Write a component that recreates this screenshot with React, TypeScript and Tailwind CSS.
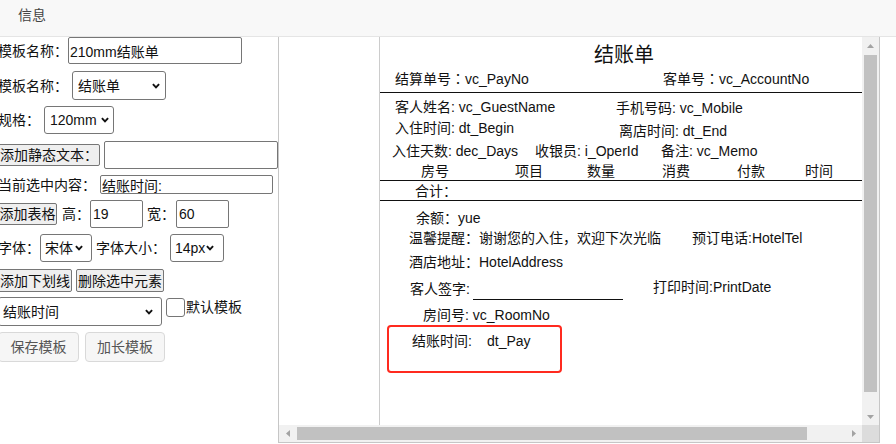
import React from "react";

const ctl = "border border-[#767676] bg-white text-[14px] text-[#111] outline-none";
const btn = "border border-[#767676] bg-[#efefef] rounded-[2px] text-[14px] leading-[18px] text-[#111] px-0 flex items-center justify-center whitespace-nowrap";
const T = "absolute whitespace-nowrap text-[14px] leading-[20px] text-[#111]";

function Chevron({ className }: { className: string }) {
  return (
    <svg
      width="8"
      height="6"
      viewBox="0 0 8 6"
      className={"pointer-events-none absolute top-1/2 -translate-y-1/2 " + className}
    >
      <path d="M0.9 1.1 L4 4.4 L7.1 1.1" fill="none" stroke="#111" strokeWidth="1.9" />
    </svg>
  );
}

function Colon() {
  return <span className="font-['Noto_Sans_CJK_TC',sans-serif]">：</span>;
}

function Arrow({ dir }: { dir: "up" | "down" | "left" | "right" }) {
  const d =
    dir === "up"
      ? "M0 4 L3.5 0 L7 4 Z"
      : dir === "down"
      ? "M0 0 L7 0 L3.5 4 Z"
      : dir === "left"
      ? "M4 0 L4 7 L0 3.5 Z"
      : "M0 0 L4 3.5 L0 7 Z";
  const vert = dir === "up" || dir === "down";
  return (
    <svg width={vert ? 7 : 4} height={vert ? 4 : 7} viewBox={vert ? "0 0 7 4" : "0 0 4 7"}>
      <path d={d} fill="#a3a3a3" />
    </svg>
  );
}

export default function App() {
  return (
    <div className="w-[896px] h-[444px] overflow-hidden bg-white font-['Liberation_Sans','Noto_Sans_CJK_SC',sans-serif] text-[14px] text-[#111]">
      {/* header */}
      <header className="h-[37px] bg-[#f8f8f8] border-b border-[#e5e5e5] pl-[18px] pt-[5px] leading-[20px] text-[#444]">
        信息
      </header>

      <div className="flex h-[407px]">
        {/* left panel */}
        <aside className="w-[278px] shrink-0 overflow-hidden">
          <div className="-ml-[2px] flex flex-col leading-[20px]">
            {/* row 1 */}
            <div className="flex items-center h-[27px]">
              <span className="w-[70px] shrink-0">模板名称：</span>
              <input
                readOnly
                value="210mm结账单"
                className={ctl + " w-[174px] h-[27px] rounded-[2px] px-[1px]"}
              />
            </div>
            {/* row 2 */}
            <div className="flex items-center h-[29px] mt-[7px]">
              <span className="w-[70px] shrink-0 mr-[4px]">模板名称：</span>
              <div className="relative w-[94px] h-[29px]">
                <select className={ctl + " appearance-none w-full h-full rounded-[3px] pl-[5px]"} defaultValue="a">
                  <option value="a">结账单</option>
                </select>
                <Chevron className="right-[6px]" />
              </div>
            </div>
            {/* row 3 */}
            <div className="flex items-center h-[28px] mt-[6px]">
              <span className="w-[42px] shrink-0 mr-[4px]">规格：</span>
              <div className="relative w-[70px] h-[28px]">
                <select className={ctl + " appearance-none w-full h-full rounded-[3px] pl-[5px]"} defaultValue="a">
                  <option value="a">120mm</option>
                </select>
                <Chevron className="right-[5px]" />
              </div>
            </div>
            {/* row 4 */}
            <div className="flex items-center h-[28px] mt-[7px]">
              <button className={btn + " w-[102px] h-[22px]"}>添加静态文本：</button>
              <input readOnly value="" className={ctl + " ml-[4px] w-[174px] h-[28px] rounded-[2px] px-[2px]"} />
            </div>
            {/* row 5 */}
            <div className="flex items-center h-[19px] mt-[6px]">
              <span className="w-[98px] shrink-0 mr-[4px]">当前选中内容：</span>
              <input
                readOnly
                value="结账时间:"
                className={ctl + " w-[173px] h-[19px] rounded-[2px] pl-[1px] text-[13px] leading-[17px]"}
              />
            </div>
            {/* row 6 */}
            <div className="flex items-center h-[28px] mt-[6px]">
              <button className={btn + " w-[59px] h-[22px]"}>添加表格</button>
              <span className="ml-[5px] w-[28px] shrink-0">高：</span>
              <input readOnly value="19" className={ctl + " w-[53px] h-[28px] rounded-[2px] pl-[2px]"} />
              <span className="ml-[4px] w-[29px] shrink-0">宽：</span>
              <input readOnly value="60" className={ctl + " w-[53px] h-[28px] rounded-[2px] pl-[2px]"} />
            </div>
            {/* row 7 */}
            <div className="flex items-center h-[28px] mt-[6px]">
              <span className="w-[42px] shrink-0">字体：</span>
              <div className="relative w-[52px] h-[28px]">
                <select className={ctl + " appearance-none w-full h-full rounded-[3px] pl-[4px]"} defaultValue="a">
                  <option value="a">宋体</option>
                </select>
                <Chevron className="right-[9px]" />
              </div>
              <span className="ml-[4px] w-[70px] shrink-0">字体大小：</span>
              <div className="relative ml-[4px] w-[54px] h-[28px]">
                <select className={ctl + " appearance-none w-full h-full rounded-[3px] pl-[4px]"} defaultValue="a">
                  <option value="a">14px</option>
                </select>
                <Chevron className="right-[10px]" />
              </div>
            </div>
            {/* row 8 */}
            <div className="flex items-center h-[23px] mt-[7px]">
              <button className={btn + " w-[74px] h-[23px]"}>添加下划线</button>
              <button className={btn + " ml-[4px] w-[88px] h-[23px]"}>删除选中元素</button>
            </div>
            {/* row 9 */}
            <div className="flex items-start h-[29px] mt-[5px]">
              <div className="relative w-[164px] h-[29px]">
                <select className={ctl + " appearance-none w-full h-full rounded-[3px] pl-[4px]"} defaultValue="a">
                  <option value="a">结账时间</option>
                </select>
                <Chevron className="right-[9px]" />
              </div>
              <input
                type="checkbox"
                className="appearance-none ml-[4px] mt-[1px] w-[19px] h-[19px] border border-[#767676] rounded-[3px] bg-white"
              />
              <span className="ml-[1px] leading-[20px]">默认模板</span>
            </div>
            {/* row 10 */}
            <div className="flex items-center h-[30px] mt-[6px]">
              <button className="w-[81px] h-[30px] border border-[#d9d9d9] bg-[#f6f6f6] rounded-[4px] text-[14px] text-[#555]">
                保存模板
              </button>
              <button className="ml-[6px] w-[80px] h-[30px] border border-[#d9d9d9] bg-[#f6f6f6] rounded-[4px] text-[14px] text-[#555]">
                加长模板
              </button>
            </div>
          </div>
        </aside>

        {/* right panel */}
        <section className="w-[602px] h-[406px] shrink-0 border-l border-r border-b border-[#c6c6c6] flex flex-col">
          <div className="flex flex-1 min-h-0">
            <div className="flex-1 relative overflow-hidden pl-[100px]">
              <div className="relative w-[800px] h-full border-l border-[#cccccc] bg-white">
                <span className="absolute whitespace-nowrap text-[20px] leading-[28px] text-[#111] left-[214px] top-[4px]">结账单</span>
                <span className={T + " left-[15px] top-[31px]"}>结算单号<Colon />vc_PayNo</span>
                <span className={T + " left-[283px] top-[31px]"}>客单号<Colon />vc_AccountNo</span>
                <div className="absolute left-0 right-0 top-[55px] h-px bg-[#111]" />
                <span className={T + " left-[15px] top-[60px]"}>客人姓名: vc_GuestName</span>
                <span className={T + " left-[236px] top-[61px]"}>手机号码: vc_Mobile</span>
                <span className={T + " left-[15px] top-[81px]"}>入住时间: dt_Begin</span>
                <span className={T + " left-[239px] top-[84px]"}>离店时间: dt_End</span>
                <span className={T + " left-[12px] top-[104px]"}>入住天数: dec_Days</span>
                <span className={T + " left-[155px] top-[104px]"}>收银员: i_OperId</span>
                <span className={T + " left-[281px] top-[104px]"}>备注: vc_Memo</span>
                <span className={T + " left-[41px] top-[124px]"}>房号</span>
                <span className={T + " left-[135px] top-[124px]"}>项目</span>
                <span className={T + " left-[207px] top-[124px]"}>数量</span>
                <span className={T + " left-[282px] top-[124px]"}>消费</span>
                <span className={T + " left-[357px] top-[124px]"}>付款</span>
                <span className={T + " left-[425px] top-[124px]"}>时间</span>
                <div className="absolute left-0 right-0 top-[143px] h-px bg-[#111]" />
                <span className={T + " left-[35px] top-[144px]"}>合计：</span>
                <div className="absolute left-0 right-0 top-[163px] h-px bg-[#111]" />
                <span className={T + " left-[36px] top-[171px]"}>余额：yue</span>
                <span className={T + " left-[29px] top-[191px]"}>温馨提醒：谢谢您的入住，欢迎下次光临</span>
                <span className={T + " left-[312px] top-[191px]"}>预订电话:HotelTel</span>
                <span className={T + " left-[29px] top-[215px]"}>酒店地址：HotelAddress</span>
                <span className={T + " left-[30px] top-[242px]"}>客人签字:</span>
                <div className="absolute left-[93px] top-[262px] w-[150px] h-px bg-[#111]" />
                <span className={T + " left-[273px] top-[240px]"}>打印时间:PrintDate</span>
                <span className={T + " left-[43px] top-[268px]"}>房间号: vc_RoomNo</span>
                <div className="absolute left-[7px] top-[288px] w-[175px] h-[48px] border-2 border-[#ff2a1f] rounded-[4px] flex items-start pt-[4px] pl-[23px] leading-[20px] text-[14px] text-[#111] whitespace-nowrap">
                  <span className="w-[75px] shrink-0">结账时间:</span>
                  <span>dt_Pay</span>
                </div>
              </div>
            </div>
            {/* vertical scrollbar */}
            <div className="w-[17px] shrink-0 bg-[#f1f1f1] flex flex-col">
              <div className="h-[17px] flex items-center justify-center">
                <Arrow dir="up" />
              </div>
              <div className="mt-[1px] mx-[2px] h-[337px] bg-[#c1c1c1]" />
              <div className="flex-1" />
              <div className="h-[17px] flex items-center justify-center">
                <Arrow dir="down" />
              </div>
            </div>
          </div>
          {/* horizontal scrollbar */}
          <div className="h-[17px] shrink-0 flex">
            <div className="flex-1 bg-[#f1f1f1] flex">
              <div className="w-[17px] flex items-center justify-center">
                <Arrow dir="left" />
              </div>
              <div className="ml-[1px] my-[2px] w-[510px] bg-[#c1c1c1]" />
              <div className="flex-1" />
              <div className="w-[17px] flex items-center justify-center">
                <Arrow dir="right" />
              </div>
            </div>
            <div className="w-[17px] bg-[#dcdcdc]" />
          </div>
        </section>
      </div>
    </div>
  );
}
